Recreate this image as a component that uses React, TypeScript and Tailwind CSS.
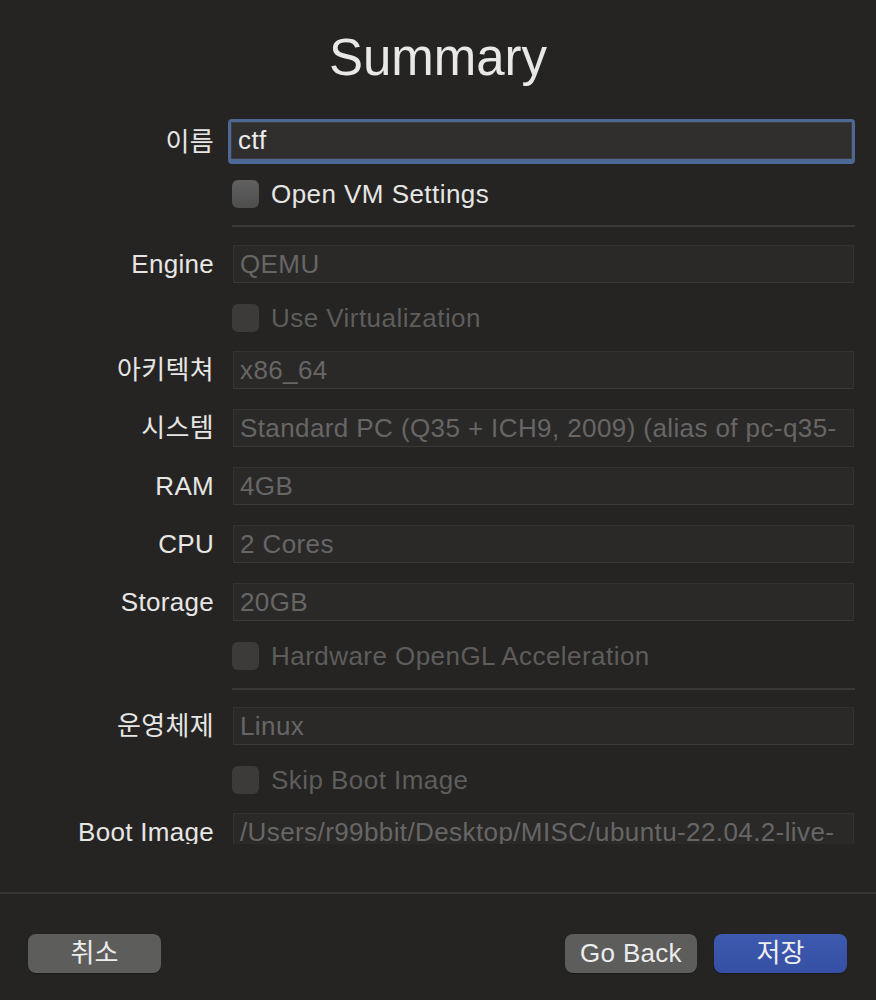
import type { JSX, ReactNode } from "react";

const FONT = "font-['Liberation_Sans','Noto_Sans_CJK_KR',sans-serif]";

type RowProps = { label?: string; children: ReactNode; className?: string };

const Row = ({ label, children, className = "" }: RowProps): JSX.Element => (
  <div className={`flex shrink-0 items-center ${className}`}>
    <div className="w-[214px] shrink-0 text-right text-[26px] leading-[30px] tracking-[0.3px] text-[#e6e6e5]">
      {label}
    </div>
    <div className="ml-[19px] w-[621px] shrink-0">{children}</div>
  </div>
);

const Field = ({ value }: { value: string }): JSX.Element => (
  <div className="h-[38px] overflow-hidden whitespace-nowrap border border-[#343331] border-b-[#3a3938] bg-[#2a2928] px-[6px] text-[26px] leading-[36px] tracking-[0.4px] text-[#676665]">
    {value}
  </div>
);

const Check = ({ label, disabled }: { label: string; disabled?: boolean }): JSX.Element => (
  <div className="-ml-[1px] flex h-[28px] items-center gap-[12px]">
    <div
      className={
        disabled
          ? "h-[28px] w-[27px] shrink-0 rounded-[6px] bg-[#3c3b3a]"
          : "h-[28px] w-[27px] shrink-0 rounded-[6px] bg-gradient-to-b from-[#606060] to-[#4e4e4d]"
      }
    />
    <span
      className={`text-[26px] leading-[30px] tracking-[0.45px] ${disabled ? "text-[#5e5d5c]" : "text-[#e6e6e5]"}`}
    >
      {label}
    </span>
  </div>
);

const Separator = ({ className = "" }: { className?: string }): JSX.Element => (
  <div className={`ml-[232px] h-[2px] w-[623px] shrink-0 bg-[#3a3938] ${className}`} />
);

const App = (): JSX.Element => {
  return (
    <div className={`flex h-[1000px] w-[876px] flex-col bg-[#252422] ${FONT}`}>
      {/* Title */}
      <div className="h-[100px] shrink-0 pt-[32px] text-center text-[51px] leading-[51px] text-[#e8e8e7]">
        Summary
      </div>

      {/* Form */}
      <div className="flex h-[744px] shrink-0 flex-col overflow-hidden">
        <Row label="이름" className="mt-[19px] h-[45px]">
          <div className="-ml-[5px] w-[627px] rounded-[4px] border-[3px] border-b-[5px] border-[#4b6994] bg-[#4b6994]">
            <div className="h-[37px] border border-[#3e3d3c] bg-[#302f2e] px-[6px] text-[26px] leading-[34px] tracking-[0.4px] text-[#ececec]">
              ctf
            </div>
          </div>
        </Row>
        <Row className="mt-[16px]">
          <Check label="Open VM Settings" />
        </Row>
        <Separator className="mt-[17px]" />

        <Row label="Engine" className="mt-[18px]">
          <Field value="QEMU" />
        </Row>
        <Row className="mt-[21px]">
          <Check label="Use Virtualization" disabled />
        </Row>
        <Row label="아키텍쳐" className="mt-[19px]">
          <Field value="x86_64" />
        </Row>
        <Row label="시스템" className="mt-[20px]">
          <Field value="Standard PC (Q35 + ICH9, 2009) (alias of pc-q35-" />
        </Row>
        <Row label="RAM" className="mt-[20px]">
          <Field value="4GB" />
        </Row>
        <Row label="CPU" className="mt-[20px]">
          <Field value="2 Cores" />
        </Row>
        <Row label="Storage" className="mt-[20px]">
          <Field value="20GB" />
        </Row>
        <Row className="mt-[21px]">
          <Check label="Hardware OpenGL Acceleration" disabled />
        </Row>
        <Separator className="mt-[18px]" />

        <Row label="운영체제" className="mt-[17px]">
          <Field value="Linux" />
        </Row>
        <Row className="mt-[21px]">
          <Check label="Skip Boot Image" disabled />
        </Row>
        <Row label="Boot Image" className="mt-[19px]">
          <Field value="/Users/r99bbit/Desktop/MISC/ubuntu-22.04.2-live-" />
        </Row>
      </div>

      {/* Footer */}
      <div className="mt-[48px] h-[2px] w-full shrink-0 bg-[#383736]" />
      <div className="mt-[40px] flex shrink-0 items-center px-[28px] pr-[29px]">
        <button className="h-[39px] w-[133px] rounded-[8px] bg-[#5d5d5c] text-[26px] text-[#ececec] shadow-[0_1px_1px_rgba(0,0,0,0.3)]">
          취소
        </button>
        <div className="flex-1" />
        <button className="h-[39px] w-[132px] rounded-[8px] bg-[#5d5d5c] text-[26px] tracking-[0.3px] text-[#ececec] shadow-[0_1px_1px_rgba(0,0,0,0.3)]">
          Go Back
        </button>
        <button className="ml-[17px] h-[39px] w-[133px] rounded-[8px] bg-gradient-to-b from-[#3d5ab0] to-[#3550a4] text-[26px] text-[#eeeeee] shadow-[0_1px_1px_rgba(0,0,0,0.3)]">
          저장
        </button>
      </div>
    </div>
  );
};

export default App;
